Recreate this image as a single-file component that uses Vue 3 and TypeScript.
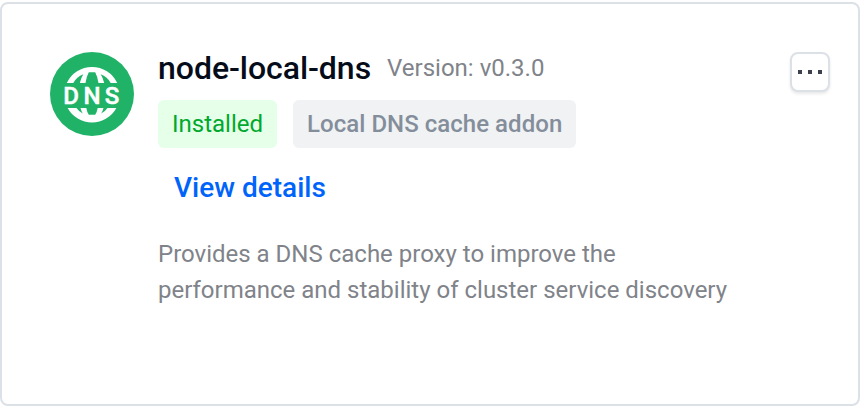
<script setup lang="ts">
interface Addon {
  name: string
  version: string
  status: string
  category: string
  description: string
}

const addon: Addon = {
  name: 'node-local-dns',
  version: 'v0.3.0',
  status: 'Installed',
  category: 'Local DNS cache addon',
  description:
    'Provides a DNS cache proxy to improve the performance and stability of cluster service discovery',
}
</script>

<template>
  <article class="card">
    <svg class="logo" viewBox="0 0 84 84" aria-hidden="true">
      <circle cx="42" cy="42" r="42" fill="#20b368" />
      <!-- upper half of the globe -->
      <path d="M16.8 31A27.8 27.8 0 0 1 67.2 31Z" fill="#fff" />
      <path d="M23.3 31Q26.5 25 33.3 22.3Q31 26 29.8 31Z" fill="#20b368" />
      <path d="M60.7 31Q57.5 25 50.7 22.3Q53 26 54.2 31Z" fill="#20b368" />
      <path d="M35.5 31Q36.4 24.5 38.8 20.2H45.2Q47.6 24.5 48.5 31Z" fill="#20b368" />
      <!-- lower half of the globe -->
      <path d="M17.6 56A27.8 27.8 0 0 0 66.4 56Z" fill="#fff" />
      <path d="M26.5 56H30.5Q31.3 59.3 32.8 61.5Q28.8 59.5 26.5 56Z" fill="#20b368" />
      <path d="M57.5 56H53.5Q52.7 59.3 51.2 61.5Q55.2 59.5 57.5 56Z" fill="#20b368" />
      <path d="M36.3 56H47.7Q47 60 45.2 62.8H38.8Q37 60 36.3 56Z" fill="#20b368" />
      <text class="logo-text" x="13.2 33.4 54.8" y="51.6">DNS</text>
    </svg>

    <div class="content">
      <header class="heading">
        <h1 class="name">{{ addon.name }}</h1>
        <span class="version">Version: {{ addon.version }}</span>
      </header>
      <div class="tags">
        <span class="tag installed">{{ addon.status }}</span>
        <span class="tag category">{{ addon.category }}</span>
      </div>
      <a class="details">View details</a>
      <p class="description">{{ addon.description }}</p>
    </div>

    <button class="more" type="button" aria-label="More">
      <i class="dot"></i><i class="dot"></i><i class="dot"></i>
    </button>
  </article>
</template>

<style>
body {
  margin: 0;
  background: #fff;
}
</style>

<style scoped>
.card {
  box-sizing: border-box;
  display: flex;
  align-items: flex-start;
  width: 860px;
  height: 404px;
  margin-top: 2px;
  padding: 48px 28px 0 48px;
  border: 2px solid #dce0e7;
  border-radius: 8px;
  background: #fff;
  font-family: Roboto, 'Liberation Sans', sans-serif;
}
.logo {
  flex: none;
  width: 84px;
  height: 84px;
}
.logo-text {
  fill: #fff;
  stroke: #fff;
  stroke-width: 0.5px;
  font: 500 24px Roboto, sans-serif;
}
.content {
  width: 600px;
  margin-left: 24px;
}
.heading {
  display: flex;
  align-items: center;
  gap: 16px;
  height: 32px;
  white-space: nowrap;
}
.name {
  margin: 0;
  color: #050c19;
  font-size: 32px;
  font-weight: 500;
  line-height: 32px;
  letter-spacing: -0.04px;
}
.version {
  color: #80838a;
  font-size: 24px;
  line-height: 32px;
}
.tags {
  display: flex;
  gap: 16px;
  margin-top: 16px;
}
.tag {
  padding: 0 14px;
  border-radius: 6px;
  font-size: 24px;
  line-height: 48px;
  white-space: nowrap;
}
.installed {
  background: #e6ffe9;
  color: #00a82d;
}
.category {
  background: #f0f2f4;
  color: #848e9b;
  font-weight: 500;
  letter-spacing: 0.04px;
}
.details {
  display: block;
  margin: 20px 0 0 16px;
  color: #0064fa;
  font-size: 28px;
  font-weight: 500;
  line-height: 40px;
}
.description {
  margin: 28px 0 0;
  color: #80838a;
  font-size: 24px;
  line-height: 36px;
}
.more {
  box-sizing: border-box;
  display: flex;
  align-items: center;
  justify-content: center;
  gap: 6px;
  width: 40px;
  height: 40px;
  margin-left: auto;
  padding: 0;
  border: 2px solid #dce0e7;
  border-radius: 8px;
  background: #fff;
  box-shadow: 0 2px 3px rgba(0, 0, 0, 0.09);
}
.dot {
  width: 4px;
  height: 4px;
  background: #3c424d;
}
</style>
